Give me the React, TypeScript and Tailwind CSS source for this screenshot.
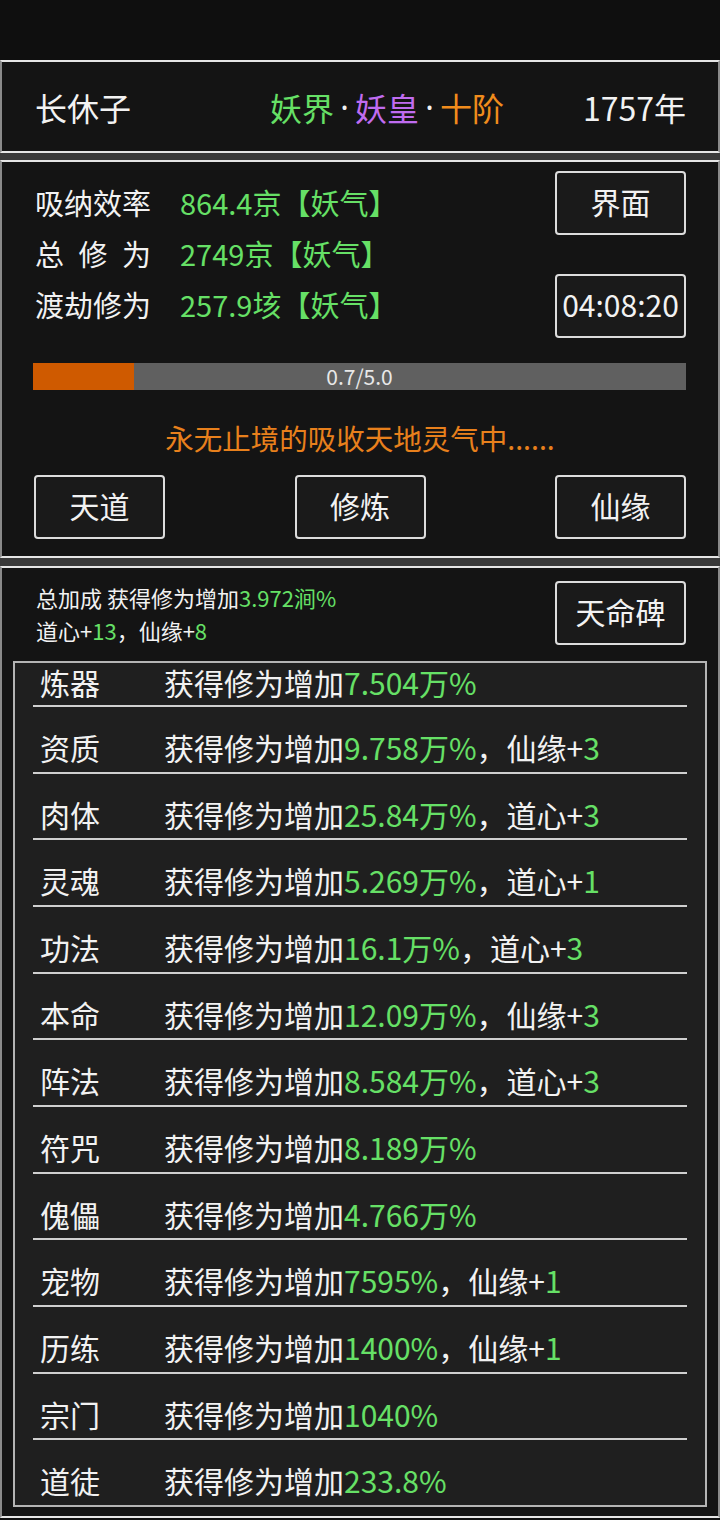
import React from "react";

const bonusRows: { name: string; value: string; extra?: [string, string] }[] = [
  { name: "炼器", value: "7.504万%" },
  { name: "资质", value: "9.758万%", extra: ["仙缘", "3"] },
  { name: "肉体", value: "25.84万%", extra: ["道心", "3"] },
  { name: "灵魂", value: "5.269万%", extra: ["道心", "1"] },
  { name: "功法", value: "16.1万%", extra: ["道心", "3"] },
  { name: "本命", value: "12.09万%", extra: ["仙缘", "3"] },
  { name: "阵法", value: "8.584万%", extra: ["道心", "3"] },
  { name: "符咒", value: "8.189万%" },
  { name: "傀儡", value: "4.766万%" },
  { name: "宠物", value: "7595%", extra: ["仙缘", "1"] },
  { name: "历练", value: "1400%", extra: ["仙缘", "1"] },
  { name: "宗门", value: "1040%" },
  { name: "道徒", value: "233.8%" },
];

function GameButton({ children, className = "" }: { children: React.ReactNode; className?: string }) {
  return (
    <button
      className={`flex h-[64px] w-[131px] items-center justify-center rounded-[4px] border-2 border-[#dcdcdc] bg-[#1a1a1a] pb-[4px] text-[30px] leading-none text-[#f2f2f2] ${className}`}
    >
      {children}
    </button>
  );
}

export default function App() {
  return (
    <div className="flex h-[1520px] w-[720px] flex-col bg-[#101010] font-['Noto_Sans_CJK_SC','Noto_Sans',sans-serif] text-[#f2f2f2]">
      <div className="h-[60px] shrink-0 bg-[#0f0f0f]" />

      {/* header */}
      <header className="flex h-[93px] shrink-0 items-center border-2 border-[#e6e6e6] border-x-[#8a8a8a] bg-[#141414] pl-[33px] pr-[32px] text-[32px]">
        <span className="w-[235px]">长休子</span>
        <span className="flex items-center">
          <span className="text-[#66e066]">妖界</span>
          <span className="w-[21px] text-center font-['Noto_Sans',sans-serif] text-[#f2f2f2]">·</span>
          <span className="text-[#c06cf0]">妖皇</span>
          <span className="w-[21px] text-center font-['Noto_Sans',sans-serif] text-[#f2f2f2]">·</span>
          <span className="text-[#f08c1c]">十阶</span>
        </span>
        <span className="ml-auto">1757年</span>
      </header>

      <div className="h-[7px] shrink-0 bg-[#3a3a3a]" />

      {/* cultivation panel */}
      <section className="flex h-[398px] shrink-0 flex-col border-2 border-[#e6e6e6] border-x-[#8a8a8a] bg-[#141414] px-[32px] pt-[9px]">
        <div className="flex">
          <div className="flex-1 pl-[1px] pt-[6px] text-[29px]">
            <div className="flex h-[51px] items-center">
              <span className="w-[145px]">吸纳效率</span>
              <span className="text-[#66e066]">864.4京【妖气】</span>
            </div>
            <div className="flex h-[52px] items-center">
              <span className="flex w-[116px] justify-between">
                <span>总</span>
                <span>修</span>
                <span>为</span>
              </span>
              <span className="ml-[29px] text-[#66e066]">2749京【妖气】</span>
            </div>
            <div className="flex h-[49px] items-center">
              <span className="w-[145px]">渡劫修为</span>
              <span className="text-[#66e066]">257.9垓【妖气】</span>
            </div>
          </div>
          <div className="flex flex-col gap-[39px]">
            <GameButton>界面</GameButton>
            <GameButton>04:08:20</GameButton>
          </div>
        </div>

        <div className="relative -ml-px mt-[25px] flex h-[27px] items-center bg-[#606060]">
          <div className="h-full w-[101px] bg-[#cf5a00]" />
          <span className="absolute inset-0 flex items-center justify-center text-[21px] leading-none text-[#e8e8e8]">
            0.7/5.0
          </span>
        </div>

        <p className="mt-[28px] h-[40px] text-center text-[28.5px] leading-[40px] text-[#e8801c]">
          永无止境的吸收天地灵气中......
        </p>

        <div className="mt-[17px] flex justify-between">
          <GameButton>天道</GameButton>
          <GameButton>修炼</GameButton>
          <GameButton>仙缘</GameButton>
        </div>
      </section>

      <div className="h-[8px] shrink-0 bg-[#3a3a3a]" />

      {/* bonus panel */}
      <section className="flex min-h-0 flex-1 flex-col border-2 border-[#e6e6e6] border-x-[#8a8a8a] bg-[#141414] px-[11px] pb-[9px]">
        <div className="flex items-start pl-[23px] pr-[21px] pt-[13px]">
          <div className="flex-1 text-[22px] leading-[33px]">
            <p>
              总加成 获得修为增加<span className="text-[#66e066]">3.972涧%</span>
            </p>
            <p>
              道心+<span className="text-[#66e066]">13</span>，仙缘+<span className="text-[#66e066]">8</span>
            </p>
          </div>
          <GameButton>天命碑</GameButton>
        </div>

        <div className="mt-[14px] min-h-0 flex-1 overflow-hidden border-2 border-[#b4b4b4] bg-[#1f1f1f] px-[18px]">
          {bonusRows.map((row, i) => (
            <div
              key={row.name}
              className={`flex border-b-2 border-[#cfcfcf] text-[30px] ${
                i === 0 ? "h-[44px] leading-[38px]" : "h-[66.67px] pt-[20px] leading-[40px]"
              }`}
            >
              <span className="w-[131px] pl-[7px]">{row.name}</span>
              <span>
                获得修为增加<span className="text-[#66e066]">{row.value}</span>
                {row.extra && (
                  <>
                    ，{row.extra[0]}+<span className="text-[#66e066]">{row.extra[1]}</span>
                  </>
                )}
              </span>
            </div>
          ))}
        </div>
      </section>

      <div className="h-[2px] shrink-0 bg-[#101010]" />
    </div>
  );
}
